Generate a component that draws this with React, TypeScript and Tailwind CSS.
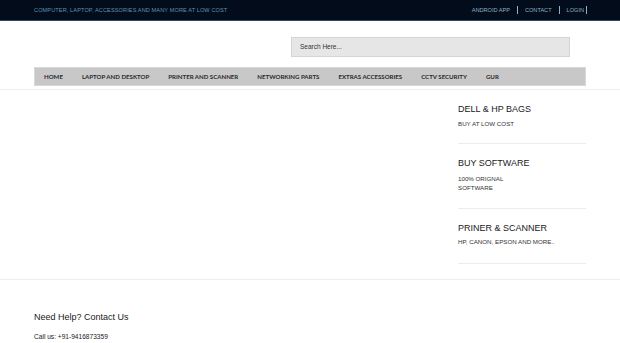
import React from "react";

const navItems = [
  "HOME",
  "LAPTOP AND DESKTOP",
  "PRINTER AND SCANNER",
  "NETWORKING PARTS",
  "EXTRAS ACCESSORIES",
  "CCTV SECURITY",
  "GUR",
];

export default function App() {
  return (
    <div className="w-[620px] h-[343px] overflow-hidden bg-white" style={{ fontFamily: '"Liberation Sans", Arial, sans-serif' }}>
      {/* top bar */}
      <div className="h-[21px] bg-[#020c1b] border-b border-[#2a4a66]">
        <div className="mx-auto w-[552px] h-[20px] flex items-center justify-between">
          <span className="text-[5.6px] text-[#5f93b5] tracking-[0.1px]">COMPUTER, LAPTOP, ACCESSORIES AND MANY MORE AT LOW COST</span>
          <div className="flex items-center text-[5.6px] text-[#8fb0c8] mr-[-1px]">
            <span>ANDROID APP</span>
            <span className="mx-[7px] h-[8px] w-px bg-[#8fb0c8]" />
            <span>CONTACT</span>
            <span className="mx-[7px] h-[8px] w-px bg-[#8fb0c8]" />
            <span>LOGIN</span>
            <span className="ml-[2px] h-[8px] w-px bg-[#8fb0c8]" />
          </div>
        </div>
      </div>

      {/* search */}
      <div className="mx-auto w-[552px] flex justify-end pt-[16px] pr-[16px]">
        <div className="w-[279px] h-[20px] bg-[#e6e6e7] border border-[#d4d4d4] flex items-center pl-[8px] text-[6.5px] text-[#333]">
          Search Here...
        </div>
      </div>

      {/* nav */}
      <div className="mx-auto w-[552px] mt-[10px] h-[19px] bg-[#c8c8c8] border border-[#d8d8d8] flex items-center pl-[9px] gap-[19px] text-[6.1px] font-bold text-[#2a2a2a]" style={{ fontFamily: 'Lato, sans-serif' }}>
        {navItems.map((n) => (
          <span key={n}>{n}</span>
        ))}
      </div>
      <div className="mt-[3px] border-t border-[#eeeeee]" />

      {/* content */}
      <div className="mx-auto w-[552px] flex">
        <div className="flex-1" />
        <div className="w-[128px] text-[#1a1a1a]">
          <div className="pt-[13px] pb-[15px] border-b border-[#ececec]">
            <div className="text-[9px] leading-[12px]">DELL &amp; HP BAGS</div>
            <div className="text-[6.2px] mt-[5px] leading-[8px] text-[#333]">BUY AT LOW COST</div>
          </div>
          <div className="pt-[13px] pb-[16px] border-b border-[#ececec]">
            <div className="text-[9px] leading-[12px]">BUY SOFTWARE</div>
            <div className="text-[6.2px] mt-[5px] leading-[9px] text-[#333]">100% ORIGNAL<br />SOFTWARE</div>
          </div>
          <div className="pt-[13px] pb-[17px] border-b border-[#ececec]">
            <div className="text-[9px] leading-[12px]">PRINER &amp; SCANNER</div>
            <div className="text-[6.2px] mt-[4px] leading-[8px] text-[#333]">HP, CANON, EPSON AND MORE..</div>
          </div>
        </div>
      </div>
      <div className="mt-[15px] border-t border-[#eeeeee]" />

      {/* footer */}
      <div className="mx-auto w-[552px] pt-[31px] text-[#1a1a1a]">
        <div className="text-[9px] leading-[12px]">Need Help? Contact Us</div>
        <div className="text-[6.6px] leading-[8px] mt-[10px]">Call us: +91-9416873359</div>
      </div>
    </div>
  );
}
